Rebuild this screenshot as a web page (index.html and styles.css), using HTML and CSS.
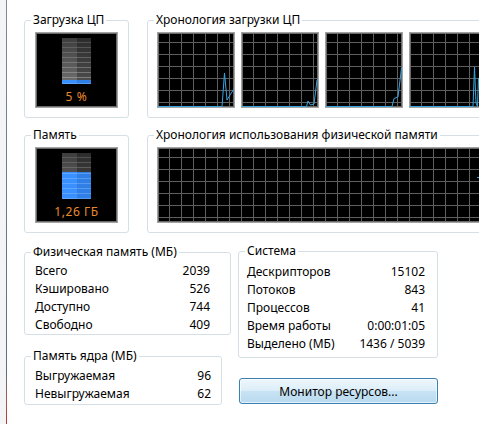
FILE: index.html
```html
<!DOCTYPE html>
<html>
<head>
  <title>Быстродействие</title>
  <link rel="stylesheet" href="styles.css">
  <meta name="viewport" content="width=device-width, initial-scale=1.0">
</head>
<body>
  <div class="window">
    <div class="edge"></div>
    <div class="tab">

      <div class="row">
        <fieldset class="group gauge">
          <legend>Загрузка ЦП</legend>
          <div class="gauge-body">
            <div class="meter">
              <div class="bar"><div class="fill" style="height: 4px"></div></div>
              <div class="meter-value">5 %</div>
            </div>
          </div>
        </fieldset>
        <fieldset class="group history">
          <legend>Хронология загрузки ЦП</legend>
          <div class="history-body">
            <div class="graph">
              <svg width="76" height="74"><polyline points="0,73.5 64,73.5 66.5,40 69,67 72,62 76,56"/></svg>
            </div>
            <div class="graph">
              <svg width="76" height="74"><polyline points="0,73.5 64.5,73.5 66,68 68.5,72 72,71 75,47 76,46"/></svg>
            </div>
            <div class="graph">
              <svg width="76" height="74"><polyline points="0,73.5 66,73.5 68,65.5 72,64 75.5,35 76,35"/></svg>
            </div>
            <div class="graph">
              <svg width="76" height="74"><polyline points="0,73.5 63,73.5 64.5,34 66,70 67.5,73.5 68.5,45 70,62"/></svg>
            </div>
          </div>
        </fieldset>
      </div>

      <div class="row second">
        <fieldset class="group gauge">
          <legend>Память</legend>
          <div class="gauge-body">
            <div class="meter">
              <div class="bar"><div class="fill" style="height: 27px"></div></div>
              <div class="meter-value">1,26 ГБ</div>
            </div>
          </div>
        </fieldset>
        <fieldset class="group history">
          <legend>Хронология использования физической памяти</legend>
          <div class="history-body">
            <div class="graph wide">
              <svg width="400" height="74"><polyline points="319,29.5 324,29.5"/></svg>
            </div>
          </div>
        </fieldset>
      </div>

      <div class="stats">
        <div class="col left-col">
          <fieldset class="group">
            <legend>Физическая память (МБ)</legend>
            <div class="list phys">
              <div class="line"><span>Всего</span><span>2039</span></div>
              <div class="line"><span>Кэшировано</span><span>526</span></div>
              <div class="line"><span>Доступно</span><span>744</span></div>
              <div class="line"><span>Свободно</span><span>409</span></div>
            </div>
          </fieldset>
          <fieldset class="group kernel">
            <legend>Память ядра (МБ)</legend>
            <div class="list kern">
              <div class="line"><span>Выгружаемая</span><span>96</span></div>
              <div class="line"><span>Невыгружаемая</span><span>62</span></div>
            </div>
          </fieldset>
        </div>
        <div class="col right-col">
          <fieldset class="group">
            <legend>Система</legend>
            <div class="list sys">
              <div class="line"><span>Дескрипторов</span><span>15102</span></div>
              <div class="line"><span>Потоков</span><span>843</span></div>
              <div class="line"><span>Процессов</span><span>41</span></div>
              <div class="line"><span>Время работы</span><span>0:00:01:05</span></div>
              <div class="line"><span>Выделено (МБ)</span><span>1436 / 5039</span></div>
            </div>
          </fieldset>
          <button class="monitor-button">Монитор ресурсов...</button>
        </div>
      </div>

    </div>
  </div>
</body>
</html>
```

FILE: styles.css
```css
html, body {
  margin: 0;
  background-color: #ffffff;
  overflow: hidden;
}
body {
  font-family: "Noto Sans", "Open Sans", sans-serif;
  font-size: 12px;
  color: #000000;
  width: 479px;
  height: 424px;
}
.window {
  display: flex;
  height: 424px;
}
.edge {
  width: 6px;
  flex: none;
  background-color: #f3f4f6;
  border-right: 1px solid #6f7c8a;
  border-image: linear-gradient(to bottom, #7d8997 0%, #5f6d7c 88%, #a45a52 94%, #b8352e 100%) 1;
}
.tab {
  padding: 13px 0 0 17px;
  flex: none;
  width: 600px;
}

/* group boxes */
.group {
  margin: 0;
  padding: 0;
  border: 1px solid #d5dfe5;
  border-radius: 3px;
  min-width: 0;
}
.group legend {
  padding: 0 2px;
  margin-left: 6px;
  line-height: 14px;
}

.row {
  display: flex;
  align-items: flex-start;
}
.row.second {
  margin-top: 10px;
}
.gauge {
  width: 105px;
  box-sizing: border-box;
  flex: none;
}
.gauge-body {
  padding: 5px 10px 9px 10px;
}
.history {
  margin-left: 18px;
  width: 420px;
  flex: none;
}
.history-body {
  display: flex;
  gap: 6px;
  padding: 5px 0 9px 9px;
}

/* meters */
.meter {
  width: 83px;
  height: 76px;
  box-sizing: border-box;
  background-color: #000000;
  border: 1px solid #a3a3a3;
  box-shadow: inset 0 0 0 1px #6a6a6a;
  padding-top: 5px;
  display: flex;
  flex-direction: column;
  align-items: center;
}
.bar {
  width: 29px;
  height: 46px;
  display: flex;
  flex-direction: column;
  justify-content: flex-end;
  background-image:
    linear-gradient(to bottom, rgba(0, 0, 0, 0.45), rgba(0, 0, 0, 0)),
    repeating-linear-gradient(to bottom, rgba(0, 0, 0, 0) 0px, rgba(0, 0, 0, 0) 4px, rgba(200, 200, 200, 0.45) 4px, rgba(200, 200, 200, 0.45) 5px),
    linear-gradient(to right, #6f6f6f 50%, #4e4e4e 50%);
}
.fill {
  background-image:
    repeating-linear-gradient(to top, rgba(160, 205, 255, 0.35) 0px, rgba(160, 205, 255, 0.35) 1px, rgba(0, 0, 0, 0) 1px, rgba(0, 0, 0, 0) 5px),
    linear-gradient(to right, #3b90ff 50%, #2f7fe6 50%);
}
.meter-value {
  margin-top: 6px;
  line-height: 14px;
  color: #ea8a2c;
  letter-spacing: 0.6px;
}

/* history graphs */
.graph {
  width: 78px;
  height: 76px;
  box-sizing: border-box;
  flex: none;
  border: 1px solid #a3a3a3;
  background-color: #000000;
  background-image:
    linear-gradient(to right, #5f5f5f 1px, transparent 1px),
    linear-gradient(to bottom, #5f5f5f 1px, transparent 1px);
  background-size: 12px 12px;
  background-position: 11px 9px;
  box-shadow: inset 0 0 0 1px #6a6a6a;
}
.graph.wide {
  width: 400px;
}
.graph svg {
  display: block;
}
.graph polyline {
  fill: none;
  stroke: #37a6e0;
  stroke-width: 1;
}

/* stats */
.stats {
  display: flex;
  margin-top: 12px;
}
.left-col {
  width: 207px;
}
.right-col {
  width: 200px;
  margin-left: 7px;
  margin-top: -1px;
}
.kernel {
  margin-top: 14px;
  width: 198px;
  box-sizing: border-box;
}
.list {
  line-height: 18px;
}
.phys {
  padding: 3px 20px 0 10px;
}
.kern {
  padding: 4px 10px 1px 10px;
}
.sys {
  padding: 5px 12px 4px 8px;
}
.line {
  display: flex;
  justify-content: space-between;
}

.monitor-button {
  display: block;
  margin: 20px 0 0 1px;
  width: 199px;
  height: 26px;
  padding: 0;
  font-family: inherit;
  font-size: 12px;
  color: #000000;
  border: 1px solid #3c7fb1;
  border-radius: 3px;
  background: linear-gradient(to bottom, #eef7fc 0%, #dcedf8 50%, #c8e3f4 50%, #b8daef 100%);
  box-shadow: inset 0 0 0 1px rgba(255, 255, 255, 0.6);
}
```
